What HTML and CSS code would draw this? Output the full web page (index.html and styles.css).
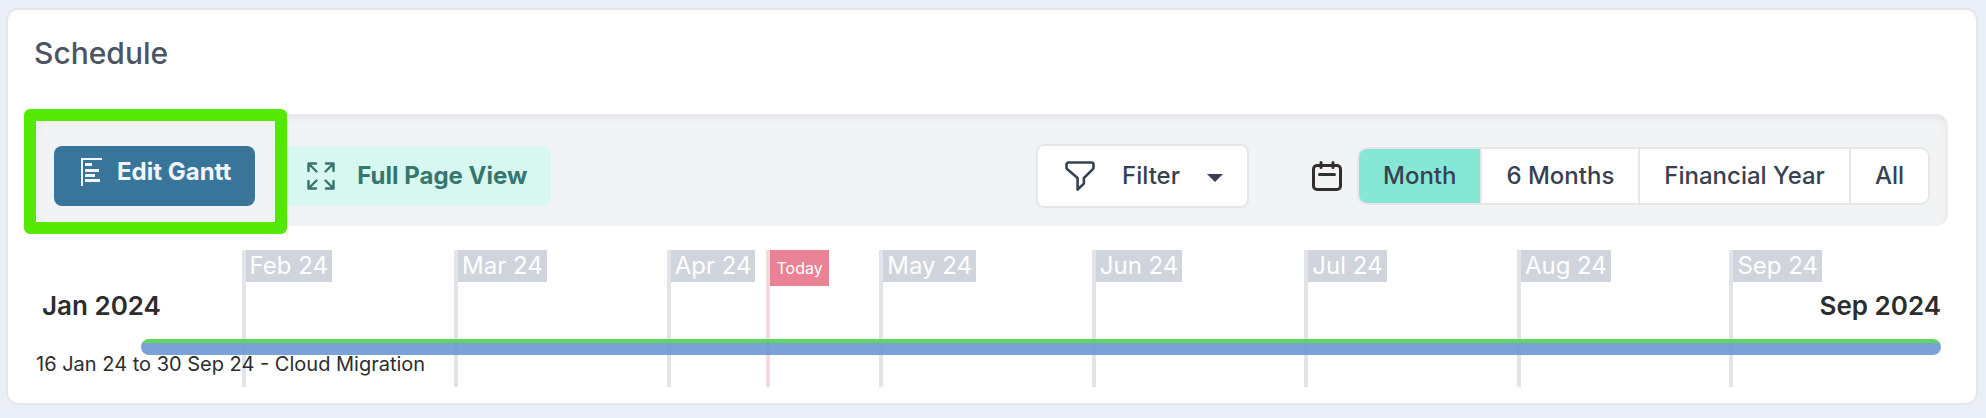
FILE: index.html
```html
<!DOCTYPE html>
<html lang="en">
<head>
    <meta charset="UTF-8">
    <meta name="viewport" content="width=device-width, initial-scale=1.0">
    <title>Schedule</title>
    <link rel="stylesheet" href="styles.css">
</head>
<body>
    <main class="card">
        <h1>Schedule</h1>

        <div class="toolbar">
            <div class="actions">
                <div class="highlight">
                    <button type="button" class="btn btn-edit">
                        <svg width="22" height="28" viewBox="0 0 22 28" fill="currentColor" aria-hidden="true">
                            <path d="M0 0h21v2H2v26H0z"/>
                            <path d="M4 5h7v3H4zM4 11h14v3H4zM4 16h10v3H4zM4 21h15v3H4z"/>
                        </svg>
                        Edit Gantt
                    </button>
                </div>
                <button type="button" class="btn btn-full">
                    <svg width="28" height="28" viewBox="0 0 28 28" fill="none" stroke="currentColor" stroke-width="2.4" stroke-linecap="round" stroke-linejoin="round" aria-hidden="true">
                        <path d="M1.5 9V1.5H9M1.5 1.5l8 8M19 1.5h7.5V9M26.5 1.5l-8 8M1.5 19v7.5H9M1.5 26.5l8-8M19 26.5h7.5V19M26.5 26.5l-8-8"/>
                    </svg>
                    Full Page View
                </button>
            </div>

            <div class="filters">
                <button type="button" class="btn-filter">
                    <svg width="30" height="30" viewBox="0 0 30 30" fill="none" stroke="currentColor" stroke-width="2.6" stroke-linejoin="round" aria-hidden="true">
                        <path d="M3.5 1.5h23a2 2 0 0 1 2 2v3.2a2 2 0 0 1-.6 1.4L18.9 17v5.6L12.6 28.5V17L2.1 8.1a2 2 0 0 1-.6-1.4V3.5a2 2 0 0 1 2-2z"/>
                    </svg>
                    Filter
                    <svg class="caret" width="16" height="8" viewBox="0 0 16 8" fill="currentColor" aria-hidden="true">
                        <path d="M0 0h16L8 8z"/>
                    </svg>
                </button>

                <svg class="calendar" width="30" height="30" viewBox="0 0 30 30" fill="none" stroke="currentColor" stroke-width="3" stroke-linecap="round" aria-hidden="true">
                    <rect x="1.5" y="4.5" width="27" height="24" rx="3.5"/>
                    <path d="M9 1.5v5M21 1.5v5M7.5 13.5h15"/>
                </svg>

                <div class="range">
                    <button type="button" class="active">Month</button>
                    <button type="button">6 Months</button>
                    <button type="button">Financial Year</button>
                    <button type="button">All</button>
                </div>
            </div>
        </div>

        <section class="gantt">
            <div class="months">
                <div class="month"></div>
                <div class="month"><span>Feb 24</span></div>
                <div class="month"><span>Mar 24</span></div>
                <div class="month"><span>Apr 24</span></div>
                <div class="month"><span>May 24</span></div>
                <div class="month"><span>Jun 24</span></div>
                <div class="month"><span>Jul 24</span></div>
                <div class="month"><span>Aug 24</span></div>
                <div class="month"><span>Sep 24</span></div>
            </div>
            <div class="today" style="left: 38.55%"><span>Today</span></div>
            <div class="rows">
                <div class="period">
                    <span>Jan 2024</span>
                    <span>Sep 2024</span>
                </div>
                <div class="bar" style="margin-left: 5.5%"></div>
                <p class="task">16 Jan 24 to 30 Sep 24 - Cloud Migration</p>
            </div>
        </section>
    </main>
</body>
</html>
```
FILE: styles.css
```css
* {
    box-sizing: border-box;
}
body {
    margin: 0;
    padding: 8px 8px 12px 6px;
    background-color: #eaeff8;
    font-family: Inter, "Liberation Sans", sans-serif;
    color: #2d2d2d;
}
.card {
    background-color: #fff;
    border: 2px solid #e5e7eb;
    border-radius: 12px;
    padding: 24px 28px 16px;
}
h1 {
    margin: 0 0 42px -2px;
    font-size: 30px;
    line-height: 38px;
    font-weight: 500;
    color: #4b5563;
}
button {
    font-family: inherit;
    font-size: 24px;
    line-height: 32px;
    cursor: pointer;
}
/* Toolbar */
.toolbar {
    display: flex;
    justify-content: space-between;
    align-items: center;
    height: 112px;
    padding: 12px 18px 0;
    border-radius: 12px;
    background-color: #f2f3f5;
    box-shadow: inset 0 4px 8px rgba(0, 0, 0, 0.06);
}
.actions, .filters {
    display: flex;
    align-items: center;
}
.btn {
    display: flex;
    align-items: center;
    height: 60px;
    border: 0;
    border-radius: 8px;
    font-weight: 700;
}
.highlight {
    position: relative;
}
/* Green frame around the edit button */
.highlight::after {
    content: "";
    position: absolute;
    inset: -37px -32px -28px -30px;
    border: 12px solid #54e805;
    border-radius: 6px;
    pointer-events: none;
}
.btn-edit {
    gap: 14px;
    padding: 0 24px 8px 27px;
    background-color: #39759b;
    color: #f0f7ff;
}
.btn-full {
    gap: 22px;
    margin-left: 24px;
    padding: 0 24px 0 28px;
    background-color: #d6f8f0;
    color: #37766f;
}
.btn-filter {
    display: flex;
    align-items: center;
    height: 64px;
    padding: 0 24px 0 27px;
    border: 2px solid #e5e7eb;
    border-radius: 8px;
    background-color: #fff;
    color: #374151;
    font-weight: 500;
    gap: 27px;
}
.caret {
    margin-top: 4px;
}
.calendar {
    margin: 0 15px 0 63px;
    color: #332d2d;
}
.range {
    display: flex;
    border: 2px solid #e5e7eb;
    border-radius: 10px;
    background-color: #fff;
    overflow: hidden;
}
.range button {
    height: 54px;
    padding: 0 24px;
    border: 0;
    background-color: transparent;
    color: #374151;
    font-weight: 500;
}
.range button + button {
    border-left: 2px solid #e5e7eb;
}
.range .active {
    background-color: #86e8d4;
}
/* Timeline, months and rows share one cell */
.gantt {
    position: relative;
    display: grid;
    margin: 24px 6px 0 -7px;
}
.months, .rows {
    grid-area: 1 / 1;
}
.months {
    display: grid;
    grid-template-columns: repeat(9, 1fr);
}
.month + .month {
    border-left: 4px solid #e3e3ea;
}
.month span {
    display: inline-block;
    padding: 0 4px;
    background-color: #d0d4dd;
    color: #fff;
    font-size: 24px;
    line-height: 32px;
}
.today {
    position: absolute;
    top: 0;
    bottom: 0;
    border-left: 4px solid #f9d7de;
}
.today span {
    display: block;
    padding: 0 6px;
    background-color: #e98294;
    color: #fff;
    font-size: 16px;
    line-height: 36px;
}
.rows {
    position: relative;
    padding: 40px 1px 14px 7px;
}
.period {
    display: flex;
    justify-content: space-between;
    padding-left: 6px;
    font-size: 26px;
    line-height: 32px;
    font-weight: 600;
}
.bar {
    height: 16px;
    margin-top: 17px;
    border-radius: 8px;
    background: linear-gradient(#5fd65c 4px, rgba(107, 152, 212, 0.9) 4px);
}
.task {
    margin: 0;
    font-size: 20px;
    line-height: 18px;
}
```
